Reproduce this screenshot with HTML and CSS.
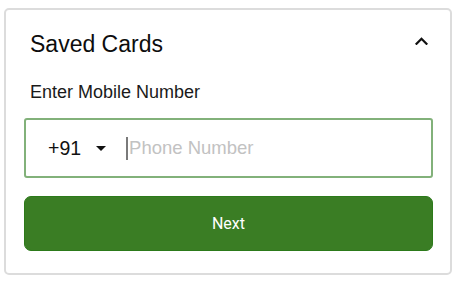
FILE: index.html
```html
<!DOCTYPE html>
<html>
<head>
<meta charset="utf-8">
<link rel="stylesheet" href="styles.css">
</head>
<body>
<div class="card">
  <div class="header">
    <h2 class="title">Saved Cards</h2>
    <svg class="chevron" width="13" height="8" viewBox="0 0 13 8"><polyline points="1.5,6.8 6.5,1.8 11.5,6.8" fill="none" stroke="#111" stroke-width="2.2" stroke-linecap="square"/></svg>
  </div>
  <div class="label">Enter Mobile Number</div>
  <div class="field">
    <span class="code">+91</span>
    <svg class="caret" width="10" height="5" viewBox="0 0 10 5"><polygon points="0,0 10,0 5,5" fill="#111"/></svg>
    <span class="cursor"></span>
    <span class="placeholder">Phone Number</span>
  </div>
  <button class="next">Next</button>
</div>
</body>
</html>
```
FILE: styles.css
```css
html, body {
  margin: 0;
  padding: 0;
  background: #fff;
}
body {
  font-family: "Liberation Sans", Arial, sans-serif;
  color: #111;
}
.card {
  box-sizing: border-box;
  width: 448px;
  height: 267px;
  margin: 8px 0 0 4px;
  border: 2px solid #dcdcdc;
  border-radius: 5px;
  padding: 20px 17px 0 18px;
  display: flex;
  flex-direction: column;
}
.header {
  display: flex;
  justify-content: space-between;
  align-items: flex-start;
  padding-left: 6px;
  height: 28px;
}
.title {
  margin: 0;
  font-size: 23px;
  line-height: 28px;
  font-weight: normal;
  color: #0d0d0d;
}
.chevron {
  display: block;
  margin-top: 7px;
  margin-right: 5px;
}
.label {
  margin-top: 23px;
  padding-left: 6px;
  font-size: 18px;
  line-height: 22px;
  color: #1a1a1a;
}
.field {
  box-sizing: border-box;
  margin-top: 15px;
  height: 60px;
  border: 2px solid #82b17a;
  border-radius: 3px;
  display: flex;
  align-items: center;
  padding-left: 22px;
}
.code {
  font-size: 19.5px;
  color: #111;
  line-height: 24px;
}
.caret {
  display: block;
  margin-left: 15px;
  margin-top: 1px;
}
.cursor {
  display: block;
  width: 2px;
  height: 23px;
  background: #7a7a7a;
  margin-left: 20px;
  margin-top: 1px;
}
.placeholder {
  font-size: 18.5px;
  color: #c2c2c2;
  margin-left: 1px;
  line-height: 24px;
}
.next {
  box-sizing: border-box;
  margin-top: 18px;
  height: 55px;
  width: 100%;
  background: #3a7d24;
  border: 1px solid #2c7a1a;
  border-radius: 7px;
  color: #fff;
  font-family: Roboto, "Liberation Sans", sans-serif;
  font-size: 16px;
  font-weight: 400;
  padding: 0;
  cursor: pointer;
}
```
